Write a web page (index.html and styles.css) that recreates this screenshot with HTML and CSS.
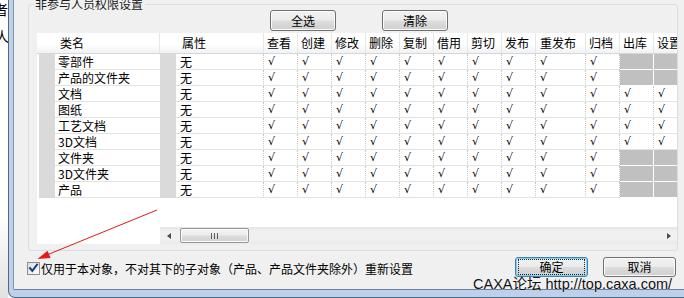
FILE: index.html
```html
<!DOCTYPE html>
<html lang="zh-CN">
<head>
<meta charset="utf-8">
<title>非参与人员权限设置</title>
<link rel="stylesheet" href="styles.css">
</head>
<body>
<div class="screen">
  <div class="bgwin">
    <div class="bg-ch1">者</div>
    <div class="bg-ch2">人</div>
  </div>
  <div class="win">
    <div class="client">
      <fieldset class="group">
        <legend class="group-title">非参与人员权限设置</legend>
        <div class="tools">
          <button class="btn btn-tool">全选</button>
          <button class="btn btn-tool">清除</button>
        </div>
        <div class="grid">
          <div class="row head">
            <div class="hp"></div><div class="hs"></div><div class="h name">类名</div><div class="hs"></div><div class="h attr">属性</div>
            <div class="h">查看</div><div class="h">创建</div><div class="h">修改</div><div class="h">删除</div><div class="h">复制</div><div class="h">借用</div><div class="h">剪切</div><div class="h">发布</div><div class="h wide">重发布</div><div class="h">归档</div><div class="h">出库</div><div class="h">设置</div>
          </div>
          <div class="row data">
            <div class="pad"></div><div class="st"></div><div class="nm">零部件</div><div class="st"></div><div class="at">无</div>
            <div class="ck">√</div><div class="ck">√</div><div class="ck">√</div><div class="ck">√</div><div class="ck">√</div><div class="ck">√</div><div class="ck">√</div><div class="ck">√</div><div class="ck">√</div><div class="ck">√</div><div class="off"></div><div class="off"></div>
          </div>
          <div class="row data">
            <div class="pad"></div><div class="st"></div><div class="nm">产品的文件夹</div><div class="st"></div><div class="at">无</div>
            <div class="ck">√</div><div class="ck">√</div><div class="ck">√</div><div class="ck">√</div><div class="ck">√</div><div class="ck">√</div><div class="ck">√</div><div class="ck">√</div><div class="ck">√</div><div class="ck">√</div><div class="off"></div><div class="off"></div>
          </div>
          <div class="row data">
            <div class="pad"></div><div class="st"></div><div class="nm">文档</div><div class="st"></div><div class="at">无</div>
            <div class="ck">√</div><div class="ck">√</div><div class="ck">√</div><div class="ck">√</div><div class="ck">√</div><div class="ck">√</div><div class="ck">√</div><div class="ck">√</div><div class="ck">√</div><div class="ck">√</div><div class="ck">√</div><div class="ck">√</div>
          </div>
          <div class="row data">
            <div class="pad"></div><div class="st"></div><div class="nm">图纸</div><div class="st"></div><div class="at">无</div>
            <div class="ck">√</div><div class="ck">√</div><div class="ck">√</div><div class="ck">√</div><div class="ck">√</div><div class="ck">√</div><div class="ck">√</div><div class="ck">√</div><div class="ck">√</div><div class="ck">√</div><div class="ck">√</div><div class="ck">√</div>
          </div>
          <div class="row data">
            <div class="pad"></div><div class="st"></div><div class="nm">工艺文档</div><div class="st"></div><div class="at">无</div>
            <div class="ck">√</div><div class="ck">√</div><div class="ck">√</div><div class="ck">√</div><div class="ck">√</div><div class="ck">√</div><div class="ck">√</div><div class="ck">√</div><div class="ck">√</div><div class="ck">√</div><div class="ck">√</div><div class="ck">√</div>
          </div>
          <div class="row data">
            <div class="pad"></div><div class="st"></div><div class="nm">3D文档</div><div class="st"></div><div class="at">无</div>
            <div class="ck">√</div><div class="ck">√</div><div class="ck">√</div><div class="ck">√</div><div class="ck">√</div><div class="ck">√</div><div class="ck">√</div><div class="ck">√</div><div class="ck">√</div><div class="ck">√</div><div class="ck">√</div><div class="ck">√</div>
          </div>
          <div class="row data">
            <div class="pad"></div><div class="st"></div><div class="nm">文件夹</div><div class="st"></div><div class="at">无</div>
            <div class="ck">√</div><div class="ck">√</div><div class="ck">√</div><div class="ck">√</div><div class="ck">√</div><div class="ck">√</div><div class="ck">√</div><div class="ck">√</div><div class="ck">√</div><div class="ck">√</div><div class="off"></div><div class="off"></div>
          </div>
          <div class="row data">
            <div class="pad"></div><div class="st"></div><div class="nm">3D文件夹</div><div class="st"></div><div class="at">无</div>
            <div class="ck">√</div><div class="ck">√</div><div class="ck">√</div><div class="ck">√</div><div class="ck">√</div><div class="ck">√</div><div class="ck">√</div><div class="ck">√</div><div class="ck">√</div><div class="ck">√</div><div class="off"></div><div class="off"></div>
          </div>
          <div class="row data">
            <div class="pad"></div><div class="st"></div><div class="nm">产品</div><div class="st"></div><div class="at">无</div>
            <div class="ck">√</div><div class="ck">√</div><div class="ck">√</div><div class="ck">√</div><div class="ck">√</div><div class="ck">√</div><div class="ck">√</div><div class="ck">√</div><div class="ck">√</div><div class="ck">√</div><div class="off"></div><div class="off"></div>
          </div>
          <div class="grid-fill"></div>
          <div class="grid-bottom">
            <div class="frozen-blank"></div>
            <div class="hscroll">
              <div class="sb-btn"><span class="arrow-l"></span></div>
              <div class="thumb"><span class="grip"></span></div>
              <div class="track"></div>
              <div class="sb-btn"><span class="arrow-r"></span></div>
            </div>
          </div>
        </div>
      </fieldset>
      <div class="footer">
        <label class="chk">
          <span class="box"><svg width="11" height="11" viewBox="0 0 11 11"><path d="M2 5.2 L4.3 7.8 L9 1.8" fill="none" stroke="#1f3f86" stroke-width="2.1" stroke-linecap="square"/></svg></span>
          <span class="chk-text">仅用于本对象，不对其下的子对象（产品、产品文件夹除外）重新设置</span>
        </label>
        <div class="actions">
          <button class="btn btn-act btn-default"><span class="focus">确定</span></button>
          <button class="btn btn-act">取消</button>
        </div>
      </div>
    </div>
  </div>
  <svg class="annot" width="684" height="298" viewBox="0 0 684 298">
    <line x1="157" y1="210" x2="48" y2="254.5" stroke="#e21b1b" stroke-width="1"/>
    <polygon points="37.5,259 47.6,250.7 50.6,258.1" fill="#e21b1b"/>
  </svg>
  <div class="watermark">CAXA论坛 http://top.caxa.com/</div>
</div>
</body>
</html>
```
FILE: styles.css
```css
html, body {
  margin: 0;
  padding: 0;
}
body {
  width: 684px;
  height: 298px;
  overflow: hidden;
  background: #ffffff;
  font-family: "Noto Sans CJK SC", "Noto Sans", sans-serif;
  font-size: 12px;
  color: #000;
}
.screen {
  position: relative;
  display: flex;
  width: 684px;
  height: 298px;
  overflow: hidden;
}
.bgwin {
  width: 8px;
  flex: none;
  overflow: hidden;
  background: linear-gradient(#ffffff 0%, #ffffff 72%, #e2e2e2 100%);
  font-size: 14px;
  line-height: 16px;
  white-space: nowrap;
}
.bg-ch1 { margin: 1px 0 0 -6px; }
.bg-ch2 { margin: 11px 0 0 -5px; }

.win {
  flex: none;
  width: 676px;
  height: 298px;
  box-sizing: border-box;
  border-left: 1px solid #56697e;
  border-bottom: 1px solid #56697e;
  border-bottom-left-radius: 7px;
  background: #bdd2ea;
  padding: 0 0 7px 4px;
}
.client {
  height: 290px;
  box-sizing: border-box;
  border-left: 1px solid #8196ad;
  border-bottom: 1px solid #6a7f97;
  border-bottom-left-radius: 2px;
  background: #f0f0f0;
  display: flex;
  flex-direction: column;
}

.group {
  flex: none;
  margin: -3px 0 0 14px;
  padding: 0;
  width: 650px;
  min-width: 0;
  box-sizing: border-box;
  border: 1px solid #d5dfe5;
  border-radius: 3px;
}
.group-title {
  margin-left: 4px;
  padding: 0 2px;
  font-size: 12px;
  line-height: 14px;
  color: #1a1a1a;
}

.tools {
  display: flex;
  gap: 46px;
  padding-left: 241px;
  margin-top: -1px;
}
.btn {
  font-family: "Noto Sans CJK SC", sans-serif;
  font-size: 12px;
  color: #000;
  padding: 0;
  border: 1px solid #707070;
  border-radius: 3px;
  background: linear-gradient(#f2f2f2 0%, #ebebeb 48%, #dddddd 52%, #cfcfcf 100%);
  box-shadow: inset 0 0 0 1px #fbfbfb;
  box-sizing: border-box;
}
.btn-tool {
  width: 66px;
  height: 21px;
  line-height: 19px;
}

.grid {
  margin: 2px 0 6px 8px;
  width: 640px;
  height: 211px;
  background: #ffffff;
  overflow: hidden;
  display: flex;
  flex-direction: column;
}
.row {
  flex: none;
  display: grid;
  grid-template-columns: 2px 16px 105px 16px 88px repeat(8, 34px) 50px 34px 34px 34px;
}
.head {
  height: 21px;
  box-sizing: border-box;
  background: linear-gradient(#ffffff 0%, #ffffff 55%, #f1f2f4 100%);
  border-bottom: 1px solid #d5d7da;
  line-height: 20px;
}
.head .h {
  padding-left: 3px;
  border-right: 1px solid #e4e6e8;
  white-space: nowrap;
  overflow: hidden;
}
.head .wide { padding-left: 4px; }
.head .name { padding-left: 5px; }
.head .attr { padding-left: 6px; }

.data {
  height: 16px;
  line-height: 15px;
}
.data > div {
  box-sizing: border-box;
  border-bottom: 1px solid #e3e3e3;
  white-space: nowrap;
  overflow: hidden;
}
.data .pad { border-bottom: 0; }
.data .st {
  background: #dadada;
  border-bottom: 0;
}
.data .nm { padding-left: 3px; }
.data .at {
  padding-left: 4px;
  border-right: 1px dotted #c8c8c8;
}
.data .ck {
  padding-left: 4px;
  border-right: 1px dotted #c8c8c8;
  font-family: "DejaVu Sans", sans-serif;
  font-size: 11px;
  font-style: italic;
}
.data .off {
  background: #c0c0c0;
  border-right: 1px solid #ffffff;
  border-bottom: 1px solid #ffffff;
}

.grid-fill { flex: 1; }
.grid-bottom {
  flex: none;
  height: 17px;
  display: flex;
}
.frozen-blank { width: 123px; flex: none; }
.hscroll {
  width: 517px;
  flex: none;
  display: flex;
  align-items: center;
  background: linear-gradient(#e6e6e6 0%, #f0f0f0 25%, #f0f0f0 75%, #e9e9e9 100%);
}
.sb-btn {
  width: 17px;
  height: 17px;
  flex: none;
  display: flex;
  align-items: center;
  justify-content: center;
}
.arrow-l {
  width: 0;
  height: 0;
  border-top: 3.5px solid transparent;
  border-bottom: 3.5px solid transparent;
  border-right: 4px solid #4a4a4a;
}
.arrow-r {
  width: 0;
  height: 0;
  border-top: 3.5px solid transparent;
  border-bottom: 3.5px solid transparent;
  border-left: 4px solid #4a4a4a;
}
.thumb {
  flex: none;
  margin-left: 3px;
  width: 69px;
  height: 15px;
  box-sizing: border-box;
  border: 1px solid #979797;
  border-radius: 2px;
  background: linear-gradient(#f4f4f4 0%, #ececec 48%, #dcdcdc 52%, #d2d2d2 100%);
  box-shadow: inset 0 0 0 1px #f9f9f9;
  display: flex;
  align-items: center;
  justify-content: center;
}
.grip {
  width: 7px;
  height: 6px;
  background: repeating-linear-gradient(90deg, #5c5c5c 0 1px, transparent 1px 3px);
}
.track { flex: 1; }

.footer {
  flex: none;
  display: flex;
  align-items: flex-start;
  margin-top: 6px;
  padding: 0 8px 0 13px;
}
.chk {
  display: flex;
  align-items: flex-start;
  margin-top: 5px;
}
.box {
  width: 13px;
  height: 13px;
  box-sizing: border-box;
  border: 1px solid #8e8f8f;
  background: linear-gradient(135deg, #dcdcdc 0%, #ffffff 100%);
  display: flex;
  align-items: center;
  justify-content: center;
}
.box svg { display: block; }
.chk-text {
  margin-left: 1px;
  line-height: 14px;
  white-space: nowrap;
}
.actions {
  margin-left: auto;
  display: flex;
  gap: 15px;
}
.btn-act {
  width: 73px;
  height: 20px;
  line-height: 18px;
}
.btn-default {
  border-color: #3c7fb1;
  box-shadow: inset 0 0 0 1px #7fd1f5;
}
.focus {
  display: block;
  margin: 1px 2px;
  border: 1px dotted #222;
  line-height: 14px;
}

.annot {
  position: absolute;
  left: 0;
  top: 0;
  pointer-events: none;
}
.watermark {
  position: absolute;
  left: 473px;
  top: 275px;
  font-family: "Liberation Sans", "Noto Sans CJK SC", sans-serif;
  font-size: 14.5px;
  line-height: 18px;
  color: #111;
  white-space: nowrap;
  text-shadow: 0 0 1px #ffffff;
}
```
